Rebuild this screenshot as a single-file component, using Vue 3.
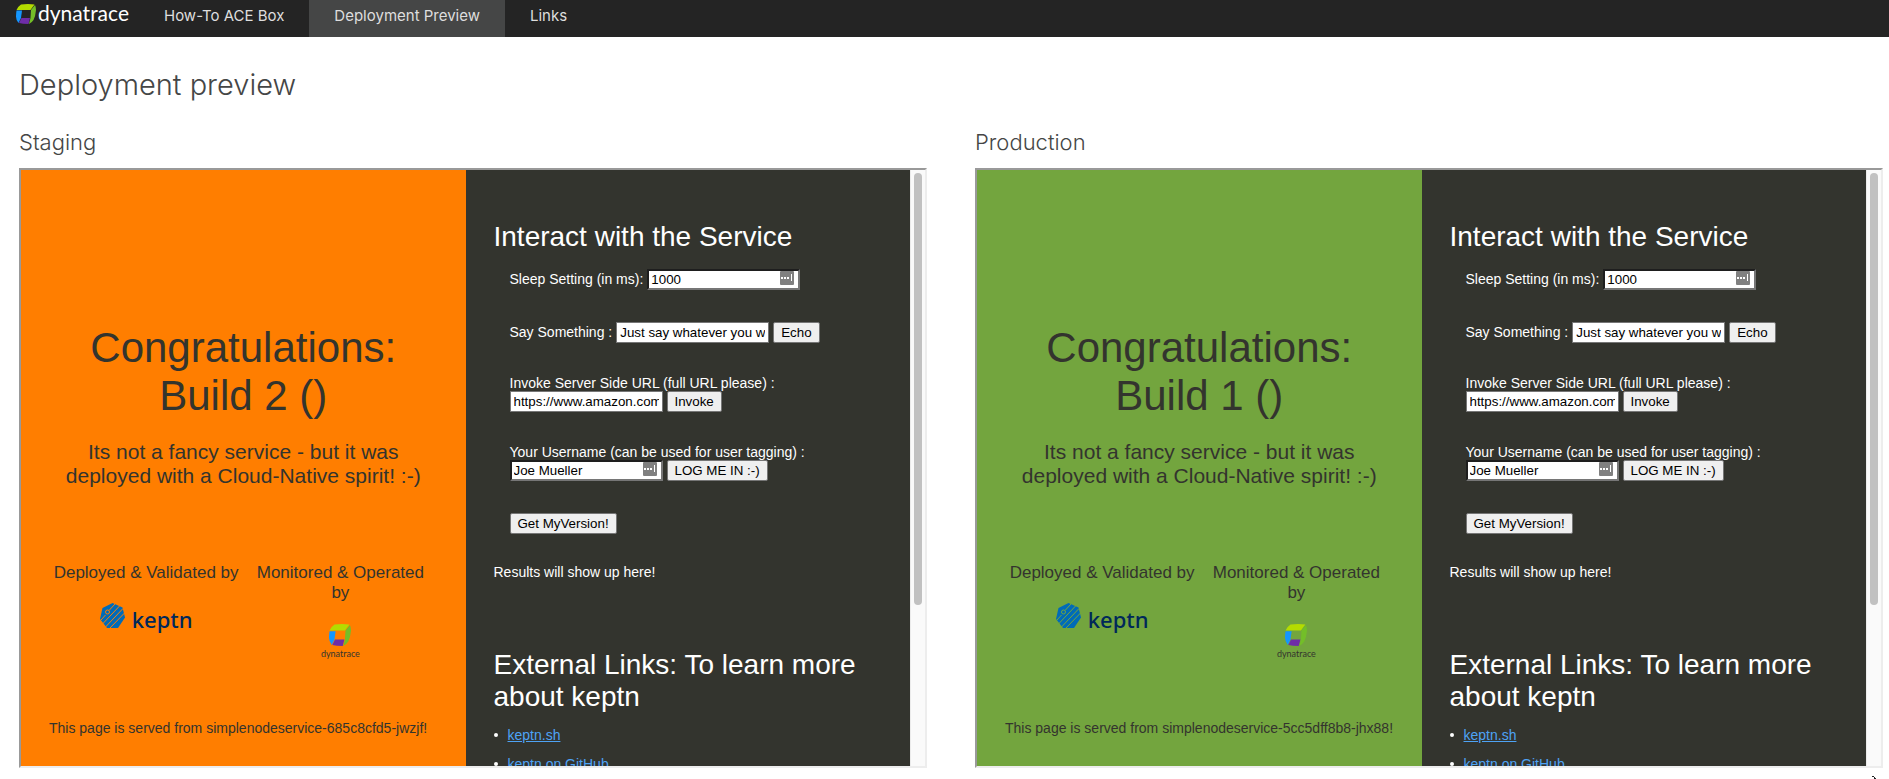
<script setup>
const navItems = [
  { label: 'How-To ACE Box', active: false },
  { label: 'Deployment Preview', active: true },
  { label: 'Links', active: false },
]

const stages = [
  { id: 'staging', title: 'Staging', build: 2, pod: 'simplenodeservice-685c8cfd5-jwzjf' },
  { id: 'production', title: 'Production', build: 1, pod: 'simplenodeservice-5cc5dff8b8-jhx88' },
]

const externalLinks = ['keptn.sh', 'keptn on GitHub']
</script>

<template>
  <div class="page">
    <header class="topbar">
      <a class="brand" href="#" aria-label="dynatrace">
        <svg class="brand-cube" viewBox="0 0 40 40" aria-hidden="true">
          <path d="M10 1Q24-1 37 1L29 12H1Q5 4 10 1z" fill="#b4dc00" />
          <path d="M1 13h11l-2 15-5 10Q0 32 0 25q0-7 1-12z" fill="#1496ff" />
          <path d="M11 28h17l-3 12q-12 0-19-2z" fill="#6f2da8" />
          <path d="M38 2q2 4 2 10-1 12-5 20-3 5-9 8l3-12 1-16z" fill="#73be28" />
        </svg>
        <span class="brand-name">dynatrace</span>
      </a>
      <nav class="menu">
        <a
          v-for="item in navItems"
          :key="item.label"
          href="#"
          class="menu-item"
          :class="{ active: item.active }"
        >{{ item.label }}</a>
      </nav>
    </header>

    <main class="content">
      <h1 class="page-title">Deployment preview</h1>
      <div class="stages">
        <section v-for="s in stages" :key="s.id" class="stage">
          <h2 class="stage-title">{{ s.title }}</h2>
          <div class="frame">
            <div class="summary" :class="s.id">
              <h3 class="congrats">Congratulations:<br />Build {{ s.build }} ()</h3>
              <p class="tagline">Its not a fancy service - but it was deployed with a Cloud-Native spirit! :-)</p>
              <div class="credits">
                <div class="credit">
                  <p class="credit-text">Deployed &amp; Validated by</p>
                  <div class="keptn">
                    <svg class="keptn-icon" viewBox="0 0 50 50" aria-hidden="true">
                      <path d="M25 0 45 9 50 29 36 50H14L0 32 5 10z" fill="#006bb8" />
                      <g class="gaps">
                        <path d="M18 15 30 2M5 42 40 5M11 48 46 11M20 50 50 19M2 34 11 24" />
                        <circle cx="15" cy="18" r="4" />
                      </g>
                    </svg>
                    <span class="keptn-name">keptn</span>
                  </div>
                </div>
                <div class="credit">
                  <p class="credit-text">Monitored &amp; Operated by</p>
                  <div class="dyna">
                    <svg class="dyna-cube" viewBox="0 0 40 40" aria-hidden="true">
                      <path d="M10 1Q24-1 37 1L29 12H1Q5 4 10 1z" fill="#b4dc00" />
                      <path d="M1 13h11l-2 15-5 10Q0 32 0 25q0-7 1-12z" fill="#1496ff" />
                      <path d="M11 28h17l-3 12q-12 0-19-2z" fill="#6f2da8" />
                      <path d="M38 2q2 4 2 10-1 12-5 20-3 5-9 8l3-12 1-16z" fill="#73be28" />
                    </svg>
                    <span class="dyna-name">dynatrace</span>
                  </div>
                </div>
              </div>
              <p class="served">This page is served from {{ s.pod }}!</p>
            </div>

            <div class="service">
              <h3 class="service-title">Interact with the Service</h3>
              <form class="controls" @submit.prevent>
                <div class="row">
                  <label :for="s.id + '-sleep'">Sleep Setting (in ms):</label>
                  <span class="field">
                    <input :id="s.id + '-sleep'" class="box sunken" type="text" value="1000" />
                    <svg class="filler" viewBox="0 0 14 14" aria-hidden="true">
                      <rect width="14" height="14" rx="1" fill="#808080" />
                      <path d="M1 6h2v2H1zM4 6h2v2H4zM7 6h2v2H7zM11 3h1v7h-1z" fill="#fff" />
                    </svg>
                  </span>
                </div>
                <div class="row">
                  <label :for="s.id + '-say'">Say Something :</label>
                  <input :id="s.id + '-say'" class="box" type="text" value="Just say whatever you want" />
                  <button type="button" class="btn">Echo</button>
                </div>
                <div class="group">
                  <label :for="s.id + '-url'">Invoke Server Side URL (full URL please) :</label>
                  <div class="row">
                    <input :id="s.id + '-url'" class="box" type="text" value="https://www.amazon.com" />
                    <button type="button" class="btn">Invoke</button>
                  </div>
                </div>
                <div class="group">
                  <label :for="s.id + '-user'">Your Username (can be used for user tagging) :</label>
                  <div class="row">
                    <span class="field">
                      <input :id="s.id + '-user'" class="box sunken" type="text" value="Joe Mueller" />
                      <svg class="filler" viewBox="0 0 14 14" aria-hidden="true">
                        <rect width="14" height="14" rx="1" fill="#808080" />
                        <path d="M1 6h2v2H1zM4 6h2v2H4zM7 6h2v2H7zM11 3h1v7h-1z" fill="#fff" />
                      </svg>
                    </span>
                    <button type="button" class="btn">LOG ME IN :-)</button>
                  </div>
                </div>
                <div class="row">
                  <button type="button" class="btn">Get MyVersion!</button>
                </div>
              </form>
              <p class="results">Results will show up here!</p>
              <h3 class="service-title">External Links: To learn more about keptn</h3>
              <ul class="links">
                <li v-for="link in externalLinks" :key="link"><a href="#">{{ link }}</a></li>
              </ul>
            </div>

            <div class="scroll-track" aria-hidden="true"><div class="scroll-thumb"></div></div>
          </div>
        </section>
      </div>
    </main>

    <svg class="pointer" viewBox="0 0 5 3" aria-hidden="true">
      <path d="M0 0h2v1h1v1h1v1H2V1H0z" fill="#222" />
    </svg>
  </div>
</template>

<style>
body {
  margin: 0;
  background: #fff;
}
</style>

<style scoped>
.page {
  font-family: Inter, 'Liberation Sans', sans-serif;
  color: #454646;
}
h1, h2, h3, p, ul {
  margin: 0;
  padding: 0;
  font-weight: 400;
}
.topbar {
  display: flex;
  height: 37px;
  background: #242424;
}
.brand {
  display: flex;
  align-items: flex-start;
  gap: 2px;
  box-sizing: border-box;
  width: 139px;
  padding: 4px 0 0 16px;
  color: #fff;
  text-decoration: none;
}
.brand-cube {
  width: 20px;
  height: 20px;
}
.brand-name {
  font-family: Lato, sans-serif;
  font-size: 21px;
  font-weight: 400;
  line-height: 17px;
}
.menu {
  display: flex;
}
.menu-item {
  padding: 0 25px 6px;
  font-size: 15px;
  line-height: 31px;
  color: #dedede;
  text-decoration: none;
  white-space: nowrap;
}
.menu-item.active {
  background: #454646;
}
.content {
  padding: 28px 6px 0 19px;
}
.page-title {
  font-size: 29px;
  font-weight: 300;
  line-height: 40px;
}
.stages {
  display: grid;
  grid-template-columns: 1fr 1fr;
  gap: 48px;
  padding-top: 21px;
}
.stage-title {
  padding-bottom: 10px;
  font-size: 22px;
  font-weight: 300;
  line-height: 32px;
}
.frame {
  display: flex;
  box-sizing: border-box;
  height: 600px;
  border: 2px solid;
  border-color: #999 #ededed #ededed #999;
  overflow: hidden;
  font-family: 'Liberation Sans', Arial, sans-serif;
  font-size: 14px;
  line-height: 16px;
}
.summary,
.service {
  flex: 1 1 0;
  min-width: 0;
  box-sizing: border-box;
}
.summary {
  padding: 154px 28px 0;
  text-align: center;
  color: #33342e;
}
.staging {
  background: #ff7e00;
}
.production {
  background: #73a53e;
}
.congrats {
  font-size: 42px;
  line-height: 48px;
}
.tagline {
  padding-top: 20px;
  font-size: 21px;
  line-height: 24px;
}
.credits {
  display: grid;
  grid-template-columns: 1fr 1fr;
  padding-top: 75px;
}
.credit {
  padding: 0 3px;
}
.credit-text {
  font-size: 17px;
  line-height: 20px;
}
.keptn {
  display: flex;
  justify-content: center;
  gap: 7px;
  padding-top: 20px;
}
.keptn-icon {
  width: 25px;
  height: 25px;
}
.gaps {
  fill: none;
  stroke-width: 2;
}
.staging .gaps {
  stroke: #ff7e00;
}
.production .gaps {
  stroke: #73a53e;
}
.keptn-name {
  font-family: 'Noto Sans', sans-serif;
  font-size: 22px;
  font-weight: 500;
  line-height: 32px;
  color: #00285a;
}
.dyna {
  display: flex;
  flex-direction: column;
  align-items: center;
  padding-top: 21px;
}
.dyna-cube {
  width: 22px;
  height: 22px;
}
.dyna-name {
  padding-top: 2px;
  font-family: Lato, sans-serif;
  font-size: 9px;
  line-height: 12px;
}
.served {
  padding-top: 60px;
  text-align: left;
}
.service {
  padding: 51px 28px 0;
  background: #33342e;
  color: #fff;
}
.service-title {
  font-size: 28px;
  line-height: 32px;
}
.controls {
  display: flex;
  flex-direction: column;
  gap: 32px;
  padding: 16px 0 0 16px;
}
.row {
  display: flex;
  align-items: baseline;
  gap: 4px;
  height: 21px;
}
.group label {
  display: block;
}
.field {
  position: relative;
}
.box {
  box-sizing: border-box;
  width: 153px;
  height: 21px;
  margin: 0;
  border: 1px solid #767676;
  padding: 2px 3px;
  background: #fff;
  color: #000;
  font-family: inherit;
}
.sunken {
  border: 2px solid;
  border-color: #1e1e1e #767676 #767676 #1e1e1e;
  padding: 1px 2px;
}
.filler {
  position: absolute;
  top: 2px;
  right: 6px;
  width: 14px;
  height: 14px;
}
.btn {
  box-sizing: border-box;
  height: 21px;
  margin: 0;
  padding: 1px 7px;
  border: 1px solid #767676;
  border-radius: 2px;
  background: #efefef;
  color: #000;
  font-family: inherit;
}
.results {
  padding: 30px 0 69px;
}
.links {
  padding-top: 14px;
  list-style: none;
}
.links li {
  display: flex;
  align-items: center;
  gap: 10px;
  padding-bottom: 13px;
}
.links li::before {
  content: '';
  width: 4px;
  height: 4px;
  border-radius: 2px;
  background: #fff;
}
.links a {
  color: #4ea3f5;
}
.scroll-track {
  box-sizing: border-box;
  width: 15px;
  padding: 3px 3px 0;
  border-left: 1px solid #ebebeb;
  background: #fafafa;
}
.scroll-thumb {
  height: 432px;
  border-radius: 4px;
  background: #c1c1c1;
}
.pointer {
  position: fixed;
  right: 12px;
  bottom: 0;
  width: 5px;
  height: 3px;
}
</style>
